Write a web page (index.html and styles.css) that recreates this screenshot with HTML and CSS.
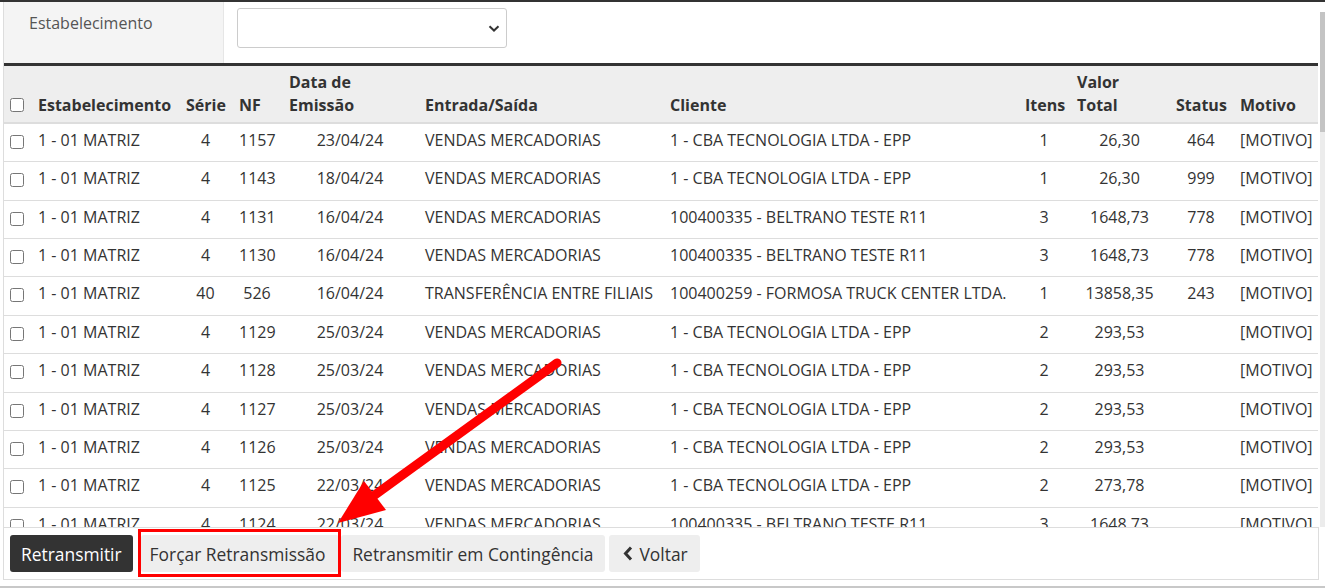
FILE: index.html
```html
<!DOCTYPE html>
<html lang="pt-BR">

<head>
    <meta charset="UTF-8">
    <meta name="viewport" content="width=device-width, initial-scale=1.0">
    <title>Retransmitir NF</title>
    <link rel="stylesheet" href="styles.css">
</head>

<body>
    <div class="top-rule"></div>

    <div class="content-wrap">
        <div class="content">
            <div class="filter">
                <div class="filter-label">Estabelecimento</div>
                <div class="filter-field">
                    <div class="select">
                        <svg width="12" height="7" viewBox="0 0 12 7"><polyline points="1.5,1.2 6,5.5 10.5,1.2" fill="none" stroke="#333" stroke-width="2"/></svg>
                    </div>
                </div>
            </div>

            <table class="grid">
                <colgroup>
                    <col style="width:27px">
                    <col style="width:148px">
                    <col style="width:53px">
                    <col style="width:50px">
                    <col style="width:136px">
                    <col style="width:245px">
                    <col style="width:355px">
                    <col style="width:52px">
                    <col style="width:99px">
                    <col style="width:64px">
                    <col style="width:85px">
                </colgroup>
                <thead>
                    <tr>
                        <th class="cb"><input type="checkbox"></th>
                        <th>Estabelecimento</th>
                        <th>Série</th>
                        <th>NF</th>
                        <th>Data de<br>Emissão</th>
                        <th>Entrada/Saída</th>
                        <th>Cliente</th>
                        <th>Itens</th>
                        <th>Valor<br>Total</th>
                        <th>Status</th>
                        <th>Motivo</th>
                    </tr>
                </thead>
                <tbody>
                    <tr><td class="cb"><input type="checkbox"></td><td>1 - 01 MATRIZ</td><td class="c">4</td><td class="c">1157</td><td class="c">23/04/24</td><td>VENDAS MERCADORIAS</td><td>1 - CBA TECNOLOGIA LTDA - EPP</td><td class="c">1</td><td class="c">26,30</td><td class="c">464</td><td>[MOTIVO]</td></tr>
                    <tr><td class="cb"><input type="checkbox"></td><td>1 - 01 MATRIZ</td><td class="c">4</td><td class="c">1143</td><td class="c">18/04/24</td><td>VENDAS MERCADORIAS</td><td>1 - CBA TECNOLOGIA LTDA - EPP</td><td class="c">1</td><td class="c">26,30</td><td class="c">999</td><td>[MOTIVO]</td></tr>
                    <tr><td class="cb"><input type="checkbox"></td><td>1 - 01 MATRIZ</td><td class="c">4</td><td class="c">1131</td><td class="c">16/04/24</td><td>VENDAS MERCADORIAS</td><td>100400335 - BELTRANO TESTE R11</td><td class="c">3</td><td class="c">1648,73</td><td class="c">778</td><td>[MOTIVO]</td></tr>
                    <tr><td class="cb"><input type="checkbox"></td><td>1 - 01 MATRIZ</td><td class="c">4</td><td class="c">1130</td><td class="c">16/04/24</td><td>VENDAS MERCADORIAS</td><td>100400335 - BELTRANO TESTE R11</td><td class="c">3</td><td class="c">1648,73</td><td class="c">778</td><td>[MOTIVO]</td></tr>
                    <tr><td class="cb"><input type="checkbox"></td><td>1 - 01 MATRIZ</td><td class="c">40</td><td class="c">526</td><td class="c">16/04/24</td><td>TRANSFERÊNCIA ENTRE FILIAIS</td><td>100400259 - FORMOSA TRUCK CENTER LTDA.</td><td class="c">1</td><td class="c">13858,35</td><td class="c">243</td><td>[MOTIVO]</td></tr>
                    <tr><td class="cb"><input type="checkbox"></td><td>1 - 01 MATRIZ</td><td class="c">4</td><td class="c">1129</td><td class="c">25/03/24</td><td>VENDAS MERCADORIAS</td><td>1 - CBA TECNOLOGIA LTDA - EPP</td><td class="c">2</td><td class="c">293,53</td><td class="c"></td><td>[MOTIVO]</td></tr>
                    <tr><td class="cb"><input type="checkbox"></td><td>1 - 01 MATRIZ</td><td class="c">4</td><td class="c">1128</td><td class="c">25/03/24</td><td>VENDAS MERCADORIAS</td><td>1 - CBA TECNOLOGIA LTDA - EPP</td><td class="c">2</td><td class="c">293,53</td><td class="c"></td><td>[MOTIVO]</td></tr>
                    <tr><td class="cb"><input type="checkbox"></td><td>1 - 01 MATRIZ</td><td class="c">4</td><td class="c">1127</td><td class="c">25/03/24</td><td>VENDAS MERCADORIAS</td><td>1 - CBA TECNOLOGIA LTDA - EPP</td><td class="c">2</td><td class="c">293,53</td><td class="c"></td><td>[MOTIVO]</td></tr>
                    <tr><td class="cb"><input type="checkbox"></td><td>1 - 01 MATRIZ</td><td class="c">4</td><td class="c">1126</td><td class="c">25/03/24</td><td>VENDAS MERCADORIAS</td><td>1 - CBA TECNOLOGIA LTDA - EPP</td><td class="c">2</td><td class="c">293,53</td><td class="c"></td><td>[MOTIVO]</td></tr>
                    <tr><td class="cb"><input type="checkbox"></td><td>1 - 01 MATRIZ</td><td class="c">4</td><td class="c">1125</td><td class="c">22/03/24</td><td>VENDAS MERCADORIAS</td><td>1 - CBA TECNOLOGIA LTDA - EPP</td><td class="c">2</td><td class="c">273,78</td><td class="c"></td><td>[MOTIVO]</td></tr>
                    <tr><td class="cb"><input type="checkbox"></td><td>1 - 01 MATRIZ</td><td class="c">4</td><td class="c">1124</td><td class="c">22/03/24</td><td>VENDAS MERCADORIAS</td><td>100400335 - BELTRANO TESTE R11</td><td class="c">3</td><td class="c">1648,73</td><td class="c"></td><td>[MOTIVO]</td></tr>
                </tbody>
            </table>
        </div>
        <div class="scrollbar">
            <div class="scroll-thumb"></div>
        </div>
    </div>

    <div class="footer">
        <button class="btn btn-dark">Retransmitir</button>
        <span class="mark"><button class="btn btn-force">Forçar Retransmissão</button></span>
        <button class="btn btn-cont">Retransmitir em Contingência</button>
        <button class="btn btn-back">
            <svg width="10" height="15" viewBox="0 0 10 15"><polyline points="8,1.5 2.5,7.5 8,13.5" fill="none" stroke="#333" stroke-width="3"/></svg>
            Voltar
        </button>
    </div>
    <div class="bottom-rule"></div>

    <!-- annotation arrow -->
    <svg class="arrow" width="1325" height="588" viewBox="0 0 1325 588">
        <line x1="557" y1="363" x2="372" y2="497" stroke="#f00" stroke-width="9" stroke-linecap="round"/>
        <polygon points="338,523 364,481 386,510" fill="#f00"/>
    </svg>
</body>

</html>
```

FILE: styles.css
```css
body {
    margin: 0;
    font-family: "Open Sans", "Liberation Sans", sans-serif;
    font-size: 16px;
    color: #333;
    background: #fff;
    position: relative;
}

.top-rule {
    height: 2px;
    background: #333;
}

.content-wrap {
    display: flex;
    margin-left: 3px;
    height: 525px;
}

.content {
    width: 1315px;
    box-sizing: border-box;
    overflow: hidden;
    border-left: 1px solid #ddd;
}

.scrollbar {
    width: 5px;
    margin-left: 2px;
    padding-top: 10px;
    background: #fff;
    display: flex;
    flex-direction: column;
}

.scrollbar::after {
    content: '';
    flex: 1;
    background: #ececec;
}

.scroll-thumb {
    height: 120px;
    background: #c4c4c4;
}

/* filtro */
.filter {
    display: flex;
    height: 61px;
    border-bottom: 3px solid #333;
}

.filter-label {
    width: 220px;
    box-sizing: border-box;
    padding: 10px 0 0 25px;
    line-height: 22px;
    background: #f4f4f4;
    border-right: 1px solid #e6e6e6;
    color: #555;
}

.filter-field {
    padding: 6px 0 0 13px;
}

.select {
    width: 270px;
    height: 40px;
    box-sizing: border-box;
    border: 1px solid #ccc;
    border-radius: 3px;
    display: flex;
    align-items: center;
    justify-content: flex-end;
    padding-right: 6px;
}

/* tabela */
.grid {
    width: 1314px;
    border-collapse: collapse;
    table-layout: fixed;
}

.grid th {
    background: #eee;
    text-align: left;
    vertical-align: bottom;
    padding: 5px 7px 4px;
    line-height: 23.4px;
    font-weight: 700;
    border-bottom: 2px solid #ddd;
    white-space: nowrap;
}

.grid td {
    padding: 5px 7px 9px;
    line-height: 23.4px;
    border-bottom: 1px solid #ddd;
    white-space: nowrap;
    vertical-align: top;
}

.grid .c {
    text-align: center;
}

.grid .cb {
    padding-left: 6px;
    padding-right: 0;
}

.cb input {
    display: block;
    width: 14px;
    height: 14px;
    margin: 0;
}

td.cb input {
    margin-top: 6px;
}

th.cb input {
    margin-bottom: 6px;
}

/* rodape */
.footer {
    margin-left: 3px;
    width: 1316px;
    box-sizing: border-box;
    border: 1px solid #ddd;
    padding: 7px 6px;
    display: flex;
}

.btn {
    height: 37px;
    padding: 0 12px;
    border: 0;
    border-radius: 3px;
    background: #eee;
    color: #333;
    font-family: "Open Sans", "Liberation Sans", sans-serif;
    font-size: 17.4px;
    display: flex;
    align-items: center;
    gap: 7px;
    white-space: nowrap;
}

.btn-dark {
    background: #333;
    color: #fff;
    padding: 0 11px;
    margin-right: 8px;
}

.btn-force {
    padding: 0 14px 0 9px;
}

.btn-cont {
    padding: 0 11px;
    margin-right: 4px;
}

.btn-back {
    padding: 0 12px 0 14px;
}

.mark {
    position: relative;
    display: flex;
    margin-right: 2px;
}

.mark::after {
    content: '';
    position: absolute;
    left: -3px;
    right: -2px;
    top: -6px;
    bottom: -5px;
    border: 3px solid #f00;
}

.bottom-rule {
    margin-top: 6px;
    border-top: 2px solid #c8c8c8;
}

.arrow {
    position: absolute;
    top: 0;
    left: 0;
    pointer-events: none;
}
```
